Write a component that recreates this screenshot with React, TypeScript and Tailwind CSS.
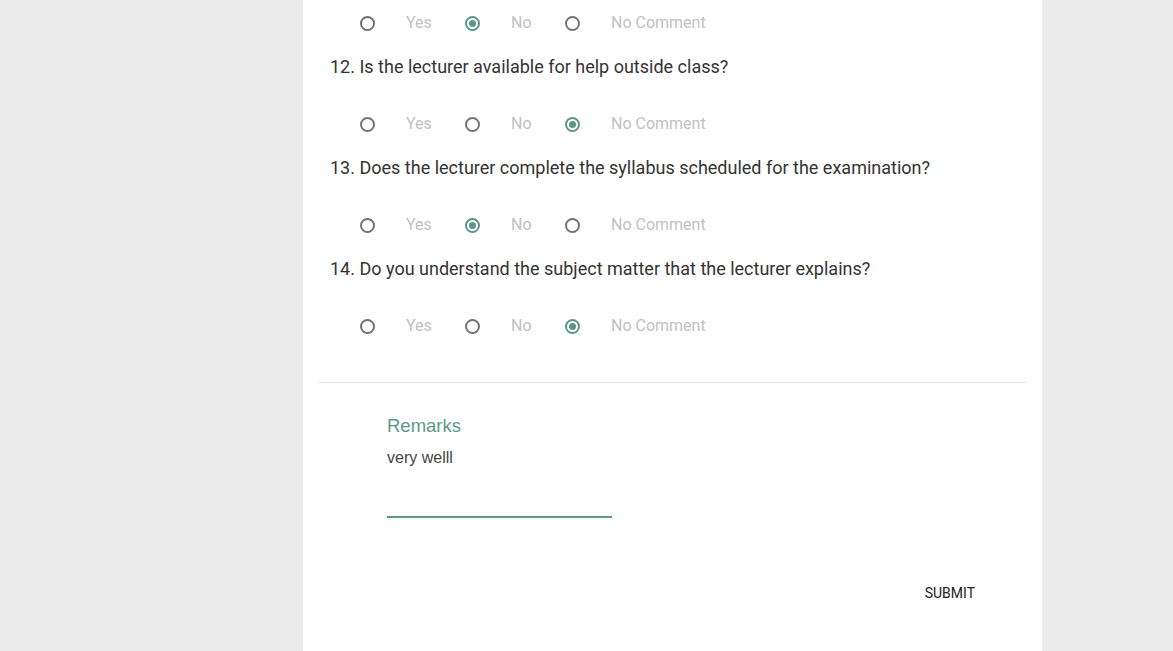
const OPTIONS = ["Yes", "No", "No Comment"];

const QUESTIONS = [
  { n: null as number | null, text: "", answer: 1 },
  { n: 12, text: "Is the lecturer available for help outside class?", answer: 2 },
  { n: 13, text: "Does the lecturer complete the syllabus scheduled for the examination?", answer: 1 },
  { n: 14, text: "Do you understand the subject matter that the lecturer explains?", answer: 2 },
];

function Radio({ checked }: { checked: boolean }) {
  return (
    <span
      className={
        "flex h-[15px] w-[15px] shrink-0 items-center justify-center rounded-full border-2 " +
        (checked ? "border-[#5c9688]" : "border-[#737373]")
      }
    >
      {checked && <span className="h-[7px] w-[7px] rounded-full bg-[#5c9688]" />}
    </span>
  );
}

function OptionsRow({ answer }: { answer: number }) {
  return (
    <div className="flex h-[28px] items-center pl-[30px]">
      {OPTIONS.map((o, i) => (
        <label
          key={o}
          className={"flex items-center " + (i === 0 ? "w-[105px]" : i === 1 ? "w-[100px]" : "")}
        >
          <Radio checked={answer === i} />
          <span className="ml-[31px] text-[16px] text-[#c2c2c2]">{o}</span>
        </label>
      ))}
    </div>
  );
}

export default function App() {
  return (
    <div className="min-h-screen bg-[#ececec] font-['Roboto',sans-serif]">
      <div className="ml-[303px] min-h-screen w-[739px] bg-white px-[15px]">
        <div className="pl-[12px] pt-[9px]">
          {QUESTIONS.map((q, idx) => (
            <div key={idx}>
              {q.n !== null && (
                <p className="mt-[15.5px] mb-[30.5px] text-[18px] leading-[27px] text-[#333]">
                  {q.n}. {q.text}
                </p>
              )}
              <OptionsRow answer={q.answer} />
            </div>
          ))}
        </div>
        <div className="mt-[42px] border-t border-[#e8e8e8]" />
        <div className="pl-[69px] pt-[31px] font-['Liberation_Sans',Arial,sans-serif]">
          <p className="text-[18.5px] leading-[24px] text-[#5e9a8c]">Remarks</p>
          <p className="mt-[11px] text-[16px] leading-[18px] text-[#444]">very welll</p>
          <div className="mt-[49px] h-[2px] w-[225px] bg-[#5e9489]" />
        </div>
        <div className="mt-[65px] flex justify-end pr-[52px]">
          <button className="text-[14px] uppercase text-[#222]">Submit</button>
        </div>
      </div>
    </div>
  );
}
